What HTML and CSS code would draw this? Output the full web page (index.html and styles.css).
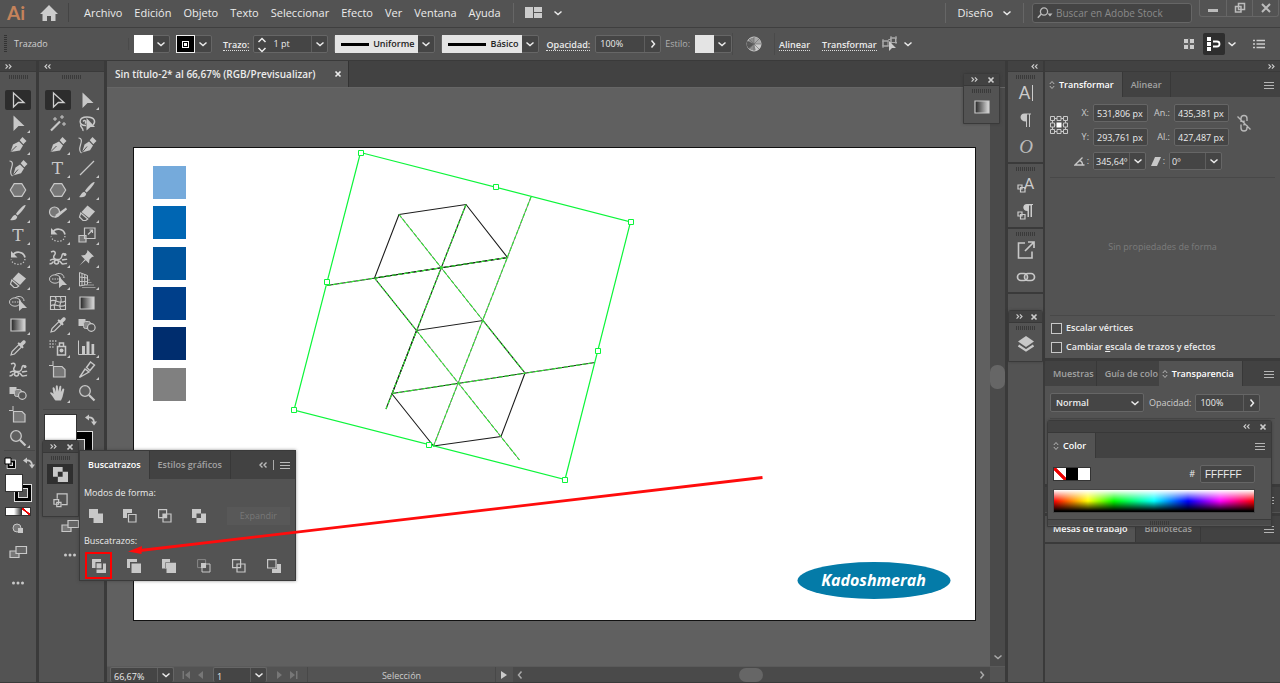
FILE: index.html
```html
<!DOCTYPE html>
<html lang="es">
<head>
<meta charset="utf-8">
<title>Sin título-2* al 66,67% (RGB/Previsualizar)</title>
<link rel="stylesheet" href="styles.css">
</head>
<body>
<svg class="sprite" aria-hidden="true">
  <defs>
    <linearGradient id="fade"><stop offset="0" stop-color="#222"/><stop offset="1" stop-color="#ddd"/></linearGradient>
  </defs>
  <symbol id="chev" viewBox="0 0 10 10"><path d="M1.500 3.500 5 6.500 8.500 3.500" fill="none" stroke="currentColor" stroke-width="1.500"/></symbol>
  <symbol id="chev-r" viewBox="0 0 10 10"><path d="M3.500 1.500 6.500 5 3.500 8.500" fill="none" stroke="currentColor" stroke-width="1.500"/></symbol>
  <symbol id="chev-l" viewBox="0 0 10 10"><path d="M6.500 1.500 3.500 5l3 3.500" fill="none" stroke="currentColor" stroke-width="1.500"/></symbol>
  <symbol id="updown" viewBox="0 0 10 18"><path d="M1.500 6 5 2.500 8.500 6M1.500 12 5 15.500 8.500 12" fill="none" stroke="currentColor" stroke-width="1.500"/></symbol>
  <symbol id="sort" viewBox="0 0 6 10"><path d="M.8 4 3 1.500 5.200 4M.8 6 3 8.500 5.200 6" fill="none" stroke="currentColor"/></symbol>
  <symbol id="dbl-r" viewBox="0 0 8 6"><path d="M.5.500 3 3 .5 5.500M4.500.500 7 3 4.500 5.500" fill="none" stroke="currentColor" stroke-width="1.400"/></symbol>
  <symbol id="dbl-l" viewBox="0 0 8 6"><path d="M3.500.500 1 3l2.500 2.500M7.500.500 5 3l2.500 2.500" fill="none" stroke="currentColor" stroke-width="1.400"/></symbol>
  <symbol id="x" viewBox="0 0 8 8"><path d="M1.500 1.500l5 5M6.500 1.500l-5 5" stroke="currentColor" stroke-width="1.700"/></symbol>
  <symbol id="menu" viewBox="0 0 10 8"><path d="M0 1.500h10M0 4.500h10M0 7.500h10" stroke="currentColor"/></symbol>
  <symbol id="dots" viewBox="0 0 20 20"><g fill="#c8c8c8"><circle cx="5.500" cy="10" r="1.500"/><circle cx="10" cy="10" r="1.500"/><circle cx="14.500" cy="10" r="1.500"/></g></symbol>
  <symbol id="home" viewBox="0 0 18 16"><path d="M9 0 18 9h-2.500v7h-4.500v-5H7v5H2.500V9H0z" fill="#ccc"/></symbol>
  <symbol id="layout" viewBox="0 0 17 11"><path d="M0 0h8v11H0zM9 0h8v5H9zM9 6h8v5H9z" fill="#ccc"/></symbol>
  <symbol id="search" viewBox="0 0 16 12"><circle cx="7" cy="4.500" r="3.600" fill="none" stroke="#bbb" stroke-width="1.300"/><path d="M4.300 7 .8 10.800" stroke="#bbb" stroke-width="1.500"/><path d="M10.500 6.500h5L13 9.500z" fill="#bbb"/></symbol>

  <symbol id="select" viewBox="0 0 20 20"><path d="M5.500 3 16 12.500h-5.700L5.500 17z" fill="none" stroke="#d0d0d0" stroke-width="1.300"/></symbol>
  <symbol id="direct" viewBox="0 0 20 20"><path d="M5.500 2.500 16.500 13h-6L5.500 18z" fill="#c8c8c8"/></symbol>
  <symbol id="pen" viewBox="0 0 20 20"><path d="M2.500 17 5 9.500 11 6.500l4 4-3 5z" fill="#c8c8c8"/><path d="M2.500 17 8.500 11" stroke="#535353"/><path d="M11.700 5.300 14.500 2l4 4-3.200 3.200z" fill="#c8c8c8"/></symbol>
  <symbol id="curve" viewBox="0 0 20 20"><path d="M5 17.500 7.500 9.500 12 6.500l4 4-3 4.700z" fill="#c8c8c8"/><path d="M5 17.500 10 11.500" stroke="#535353"/><path d="M12.700 5.300 15.500 2l4 4-3.200 3.200z" fill="#c8c8c8"/><path d="M1.500 3c4 0 3 4 2 7s-2 6 1 8" fill="none" stroke="#c8c8c8" stroke-width="1.200"/></symbol>
  <symbol id="hex" viewBox="0 0 20 20"><path d="M6.200 3.700h7.600l3.900 6.300-3.900 6.300H6.200L2.300 10z" fill="#777" stroke="#c8c8c8" stroke-width="1.200"/></symbol>
  <symbol id="brush" viewBox="0 0 20 20"><path d="M17.500 2c1 1-6 9.500-8 10.500L8 11c1-2.500 8-10 9.500-9zM7.300 11.800l2 2C9 17 5 18 2 17c2-1 2-4.500 5.300-5.200z" fill="#c8c8c8"/></symbol>
  <symbol id="rotate" viewBox="0 0 20 20"><path d="M4.500 8C7 2.500 15.500 3 17 9.500" fill="none" stroke="#c8c8c8" stroke-width="1.700"/><path d="M3 3v6.500h6.500z" fill="#c8c8c8"/><path d="M17 11c-1 7-12 7-14 .5" fill="none" stroke="#c8c8c8" stroke-width="1.200" stroke-dasharray="1.300 1.700"/></symbol>
  <symbol id="eraser" viewBox="0 0 20 20"><path d="M10.500 2.500l7.500 6-6 6.500-7.500-6z" fill="#c8c8c8"/><path d="M3.800 10l7 6-2 1.500H6L2.500 14z" fill="none" stroke="#c8c8c8" stroke-width="1.200"/></symbol>
  <symbol id="build" viewBox="0 0 20 20"><ellipse cx="7" cy="9" rx="5.500" ry="4.200" fill="none" stroke="#c8c8c8"/><path d="M7 5c3-3 9-1.500 9 3" fill="none" stroke="#c8c8c8"/><path d="M4 9h7" stroke="#c8c8c8" stroke-dasharray="1.500 1"/><path d="M11 6.500l8 8.500h-4.500L11 18z" fill="#c8c8c8"/></symbol>
  <symbol id="grad" viewBox="0 0 20 20"><path d="M3 4h14v12H3z" fill="url(#fade)" stroke="#c8c8c8" stroke-width="1.200"/></symbol>
  <symbol id="dropper" viewBox="0 0 20 20"><path d="M3 17l1-3.500 7-7 2.500 2.500-7 7z" fill="none" stroke="#c8c8c8" stroke-width="1.200"/><path d="M9.500 5.500l1.200-1.200 1.500 1L14.700 2.700c2-1.500 4 .7 2.600 2.600l-2.600 2.500 1 1.500-1.200 1.200z" fill="#c8c8c8"/></symbol>
  <symbol id="warp" viewBox="0 0 20 20"><g fill="none" stroke="#c8c8c8" stroke-width="1.500"><path d="M3 4c4-2 5 1 3.500 3s-1 4 2 4.500c4 .5 5-1 5.500-4s3-2 2.500 0M2 12.500c3-3 4 0 6-1M1.500 15.500c2 1 3-1 4-2M11 13c2 0 2 3 4 3s3-1 4-.5M14 12c2-1 4 0 5-1"/><circle cx="8.500" cy="14" r="2"/></g><circle cx="17" cy="6.500" r="1.500" fill="#c8c8c8"/></symbol>
  <symbol id="blend" viewBox="0 0 20 20"><path d="M1.500 4h7v7h-7z" fill="#c8c8c8"/><rect x="6.500" y="6.500" width="7" height="7" rx="2" fill="#888" stroke="#c8c8c8"/><circle cx="14.300" cy="12.500" r="3.800" fill="#535353" stroke="#c8c8c8" stroke-width="1.200"/></symbol>
  <symbol id="board" viewBox="0 0 20 20"><path d="M5 1v5M1 5.500h4" stroke="#c8c8c8"/><path d="M5.500 6.500H14l3 3V17H5.500z" fill="#777" stroke="#c8c8c8" stroke-width="1.200"/></symbol>
  <symbol id="zoom" viewBox="0 0 20 20"><circle cx="8" cy="8" r="5.300" fill="#5f5f5f" stroke="#c8c8c8" stroke-width="1.300"/><path d="M12 12l5.500 5.500" stroke="#c8c8c8" stroke-width="2.200"/></symbol>
  <symbol id="wand" viewBox="0 0 20 20"><path d="M3 17.500 12 8.500" stroke="#c8c8c8" stroke-width="2.200"/><path d="M14 2v4M12 4h4M7 4v4M5 6h4M16 9v4M14 11h4" stroke="#c8c8c8"/></symbol>
  <symbol id="lasso" viewBox="0 0 20 20"><path d="M9 12.500C1 13 1 4 10 4c8 0 9 5 6 8M5 11c-4 2 2 4 1 7M6 8.500c2-2 4 0 2 2" fill="none" stroke="#c8c8c8" stroke-width="1.400"/><path d="M9.500 5l8.500 9h-4.500l-4 3.500z" fill="#c8c8c8"/></symbol>
  <symbol id="line" viewBox="0 0 20 20"><path d="M3 17 17 3" stroke="#c8c8c8" stroke-width="1.300"/></symbol>
  <symbol id="shaper" viewBox="0 0 20 20"><circle cx="6.500" cy="9" r="5" fill="#777" stroke="#c8c8c8" stroke-width="1.200"/><path d="M6.500 15l1.500-3.500L18 4.500l1 2L10 14z" fill="#c8c8c8"/></symbol>
  <symbol id="scale" viewBox="0 0 20 20"><path d="M2 10.500h7V17H2z" fill="#777" stroke="#c8c8c8" stroke-width="1.200"/><path d="M7.500 3H18v10.500H7.500zM11 9.500l4-4M12.500 5H15.500v3" fill="none" stroke="#c8c8c8" stroke-width="1.200"/></symbol>
  <symbol id="pin" viewBox="0 0 20 20"><path d="M10.500 2l6.500 6.500-2 .5-2.500 2.500-.5 4L4 7.500l4-.5 2-2.500zM8.500 10.500 9.500 11.500 2.500 17.500z" fill="#c8c8c8"/></symbol>
  <symbol id="persp" viewBox="0 0 20 20"><path d="M2.500 2.500V16l8-1.500V5.500zM5 3.500v12M7.700 4.500v10.500M2.500 7l8 1M2.500 11.500l8 .2" fill="none" stroke="#c8c8c8"/><path d="M11 12.500h3.500M9 15h8M5 17.500h13.500M11 10h2" stroke="#999"/></symbol>
  <symbol id="mesh" viewBox="0 0 20 20"><path d="M2.500 3.500h15v13h-15zM2.500 8c5-3 8 4 15 0M2.500 13c5-4 9 3 15-1M7 3.500c4 4-3 8 0 13M12 3.500c4 5-3 8 1 13" fill="none" stroke="#c8c8c8" stroke-width="1.100"/></symbol>
  <symbol id="spray" viewBox="0 0 20 20"><path d="M9.500 8.500h8V17h-8zM11.500 8V5h4v3" fill="none" stroke="#c8c8c8" stroke-width="1.500"/><circle cx="13.500" cy="12.500" r="2" fill="#c8c8c8"/><path d="M1.500 3h8M1.500 6h6M1.500 9h4" stroke="#c8c8c8" stroke-width="1.300" stroke-dasharray="1.300 1.500"/></symbol>
  <symbol id="chart" viewBox="0 0 20 20"><path d="M1.500 2.500v14h17" fill="none" stroke="#c8c8c8"/><path d="M5 8h3v8H5zM9.500 3.500h3V16h-3zM14.500 6h2.700v10h-2.700z" fill="#c8c8c8"/></symbol>
  <symbol id="knife" viewBox="0 0 20 20"><path d="M2.500 17.500 8 9l4 3zM9.500 7.500l4-5.500 4 3-4.500 5.500z" fill="none" stroke="#c8c8c8" stroke-width="1.400"/></symbol>
  <symbol id="hand" viewBox="0 0 20 20"><path d="M6.500 16.500C5 13.500 3 11.500 2 10c.5-1.500 2-.7 3.500 1L4.500 5c.8-1.200 1.800-.7 2.300.8l1 3.200V3.200c.5-1.300 1.700-1.200 2 0l.6 5.300 1-5c.8-1.200 2-.8 1.900.6l-.4 5 1.700-3.300c1-1 2 0 1.600 1.300L14.500 14l-1.500 3.500H7.500z" fill="#c8c8c8"/></symbol>
  <symbol id="swap" viewBox="0 0 12 12"><path d="M3 3.500c4-.5 6 1.500 6 5" fill="none" stroke="#c8c8c8" stroke-width="1.800"/><path d="M0 3.500 4 .500v6zM6 7.500h6L9 11.500z" fill="#c8c8c8"/></symbol>
  <symbol id="deflt" viewBox="0 0 12 12"><path d="M4.500 4.500h5.500V10H4.500z" fill="none" stroke="#fff" stroke-width="3.500"/><path d="M4.500 4.500h5.500V10H4.500z" fill="none" stroke="#000" stroke-width="2"/><path d="M1 1h6v6H1z" fill="#fff" stroke="#000"/></symbol>
  <symbol id="drawmode" viewBox="0 0 20 20"><circle cx="9" cy="9" r="4" fill="#777" stroke="#c8c8c8"/><path d="M10 9h5v5h-5z" fill="#c8c8c8"/></symbol>
  <symbol id="screen" viewBox="0 0 20 20"><path d="M2 9h9v6.500H2z" fill="#777" stroke="#c8c8c8" stroke-width="1.200"/><path d="M8 4.500h10.500v7H8z" fill="#666" stroke="#c8c8c8" stroke-width="1.200"/></symbol>

  <symbol id="unite" viewBox="0 0 14 14"><path d="M0 0h9v4.500h5V14H4.500V9H0z" fill="#c8c8c8"/></symbol>
  <symbol id="minusf" viewBox="0 0 14 14"><path d="M0 0h9v4H4v5H0z" fill="#c8c8c8"/><path d="M5.500 5.500h7.500V13H5.500z" fill="none" stroke="#c8c8c8" stroke-width="1.200"/></symbol>
  <symbol id="inter" viewBox="0 0 14 14"><path d="M.6.600h8v8h-8zM5 5h8v8H5z" fill="none" stroke="#c8c8c8" stroke-width="1.200"/><path d="M5 5h4v4H5z" fill="#c8c8c8"/></symbol>
  <symbol id="exclude" viewBox="0 0 14 14"><path d="M0 0h9v4.500h5V14H4.500V9H0zM4.500 4.500V9H9V4.500z" fill="#c8c8c8" fill-rule="evenodd"/></symbol>
  <symbol id="divide" viewBox="0 0 14 14"><path d="M0 0h9v3H3.500v6H0zM14 14H4.500v-3.500H11V4.500h3z" fill="#c8c8c8"/><path d="M4.500 4.300h5v5h-5z" fill="#c8c8c8"/></symbol>
  <symbol id="trim" viewBox="0 0 14 14"><path d="M0 0h10v3H3v6H0zM4.500 4.500H14V14H4.500z" fill="#c8c8c8"/></symbol>
  <symbol id="merge" viewBox="0 0 14 14"><path d="M0 0h8v3.800h6V14H4.500V9.500H0z" fill="#c8c8c8"/><path d="M3.500 9.500V3.500H8" fill="none" stroke="#888"/></symbol>
  <symbol id="crop" viewBox="0 0 14 14"><path d="M.6.600h8v8h-8z" fill="none" stroke="#888"/><path d="M5 5h8v8H5z" fill="none" stroke="#c8c8c8"/><path d="M4 4h5v5H4z" fill="#c8c8c8"/></symbol>
  <symbol id="outline" viewBox="0 0 14 14"><path d="M.6.600h8v8h-8zM5 5h8v8H5z" fill="none" stroke="#c8c8c8" stroke-width="1.200"/></symbol>
  <symbol id="minusb" viewBox="0 0 14 14"><path d="M10 5h4v9H5v-4h5z" fill="#c8c8c8"/><path d="M.6.600h8.400V9H.6z" fill="none" stroke="#c8c8c8" stroke-width="1.200"/></symbol>
  <symbol id="gstyle" viewBox="0 0 16 16"><path d="M4.500 6V1H15v11.500H9" fill="none" stroke="#c8c8c8" stroke-width="1.300"/><path d="M1 7h5v5H1zM4 10h4.500v4.500H4z" fill="none" stroke="#c8c8c8" stroke-width="1.300"/></symbol>

  <symbol id="para" viewBox="0 0 20 20"><path d="M8.500 3.500H15v1h-1V17h-1V4.500h-2V17h-1v-5.500C3 11.500 3 3.500 8.500 3.500z" fill="#c8c8c8"/></symbol>
  <symbol id="chain" viewBox="0 0 20 20"><g fill="none" stroke="#c8c8c8" stroke-width="1.700"><rect x="1.500" y="6.500" width="10" height="7" rx="3.500"/><rect x="8.500" y="6.500" width="10" height="7" rx="3.500"/></g></symbol>
  <symbol id="export" viewBox="0 0 20 20"><path d="M9 3H2.500v15H16v-6.500" fill="none" stroke="#c8c8c8" stroke-width="1.600"/><path d="M9 11l8.500-8.500M12 2h6v6" fill="none" stroke="#c8c8c8" stroke-width="1.700"/></symbol>
  <symbol id="layers" viewBox="0 0 20 20"><path d="M10 2l8 5.500-8 5.500-8-5.500z" fill="#c8c8c8"/><path d="M2.500 11.500 10 16.500l7.500-5" fill="none" stroke="#c8c8c8" stroke-width="2.200"/></symbol>
  <symbol id="unlink" viewBox="0 0 16 18"><path d="M5 8V4.500a3 3 0 0 1 6 0V7M5 10.500V14a3 3 0 0 0 6 0v-3M8 6.500v5M1.500 2.500l13 13" fill="none" stroke="#b8b8b8" stroke-width="1.400"/></symbol>
  <symbol id="refpt" viewBox="0 0 18 18"><path d="M2.500 2.500h13v13h-13z" fill="none" stroke="#c8c8c8"/><path d="M2.500 9h13" stroke="#c8c8c8"/><g fill="#535353" stroke="#c8c8c8"><path d="M.5.500h4v4h-4zM7 .5h4v4H7zM13.500.500h4v4h-4zM.5 7h4v4h-4zM13.500 7h4v4h-4zM.5 13.500h4v4h-4zM7 13.500h4v4H7zM13.500 13.500h4v4h-4z"/></g><path d="M6 6h6v6H6z" fill="#fff" stroke="#535353"/></symbol>
  <symbol id="wheel" viewBox="0 0 16 16"><circle cx="8" cy="8" r="7" fill="#8c8c8c" stroke="#ccc"/><path d="M8 8V1a7 7 0 0 1 7 7z" fill="#aaa"/><path d="M8 8h7a7 7 0 0 1-5 6.700z" fill="#ccc"/><path d="M8 8 2.500 12.500A7 7 0 0 1 1.500 5z" fill="#555"/><path d="M8 1v14M1 8h14M3 3l10 10M13 3 3 13" stroke="#666" stroke-width=".6"/></symbol>
  <symbol id="isolate" viewBox="0 0 16 16"><path d="M1 5h5v5H1zM9 2h4.500v4.500H9zM6 4l3-1M1 3v9M0 5h7M0 10h7M9 0v8M14 0v8M8 2h7M8 6.500h7" fill="none" stroke="#aaa"/><path d="M7 5l7 7h-4l-3 3z" fill="#ccc"/></symbol>
  <symbol id="pixgrid" viewBox="0 0 12 12"><path d="M1 1h4v4H1zM7 1h4v4H7zM1 7h4v4H1zM7 7h4v4H7z" fill="#ccc"/><path d="M6 0v12M0 6h12" stroke="#888" stroke-width=".6"/></symbol>
  <symbol id="snap" viewBox="0 0 14 14"><path d="M0 0h4v4H0zM0 5h4v4H0zM0 10h4v4H0z" fill="#fff"/><path d="M6 4.500h4a2.500 2.500 0 0 1 0 5H6" fill="none" stroke="#fff" stroke-width="1.800"/></symbol>
  <symbol id="list" viewBox="0 0 12 10"><path d="M3.500 1.500H12M3.500 5H12M3.500 8.500H12M0 1.500h2M0 5h2M0 8.500h2" stroke="#ccc" stroke-width="1.300"/></symbol>
  <symbol id="angle" viewBox="0 0 11 9"><path d="M8.500.500 1 8h9.500M5.500 3.500c2 .5 3 2 3 4.500" fill="none" stroke="#c8c8c8" stroke-width="1.300"/></symbol>
  <symbol id="shear" viewBox="0 0 10 9"><path d="M4 0h6L6 9H0z" fill="#c8c8c8"/></symbol>
</svg>

<header class="menubar">
  <span class="logo">Ai</span>
  <button class="home" aria-label="Inicio"><svg width="18" height="16"><use href="#home"/></svg></button>
  <nav class="menus">
    <a href="#">Archivo</a><a href="#">Edición</a><a href="#">Objeto</a><a href="#">Texto</a><a href="#">Seleccionar</a><a href="#">Efecto</a><a href="#">Ver</a><a href="#">Ventana</a><a href="#">Ayuda</a>
  </nav>
  <button class="arrange" aria-label="Organizar documentos"><svg width="17" height="11"><use href="#layout"/></svg><svg width="10" height="10"><use href="#chev"/></svg></button>
  <div class="menubar-end">
    <button class="workspace-name">Diseño<svg width="10" height="10"><use href="#chev"/></svg></button>
    <label class="search"><svg width="16" height="12"><use href="#search"/></svg><input type="search" placeholder="Buscar en Adobe Stock" aria-label="Buscar en Adobe Stock"></label>
    <div class="win">
      <button aria-label="Minimizar"><svg width="12" height="12" viewBox="0 0 12 12"><path d="M1 8.500h10" stroke="#bbb" stroke-width="3"/></svg></button>
      <button aria-label="Restaurar"><svg width="12" height="12" viewBox="0 0 12 12"><path d="M4.500 1.500h6v6h-6zM1.500 4.500h5.500v5.500H1.500z" fill="none" stroke="#bbb" stroke-width="1.500"/></svg></button>
      <button aria-label="Cerrar"><svg width="12" height="12" viewBox="0 0 12 12"><path d="M2 2l8 8M10 2l-8 8" stroke="#bbb" stroke-width="2"/></svg></button>
    </div>
  </div>
</header>

<section class="options" aria-label="Control">
  <i class="vgrip"></i>
  <span class="context">Trazado</span>
  <div class="combo"><span class="chip white"></span><button aria-label="Relleno"><svg width="10" height="10"><use href="#chev"/></svg></button></div>
  <div class="combo"><span class="chip stroke-chip"></span><button aria-label="Trazo"><svg width="10" height="10"><use href="#chev"/></svg></button></div>
  <label class="dotted" for="stroke-w">Trazo:</label>
  <div class="combo num"><button class="stepper" aria-label="Cambiar grosor"><svg width="10" height="18"><use href="#updown"/></svg></button><input id="stroke-w" value="1 pt"><button aria-label="Grosores"><svg width="10" height="10"><use href="#chev"/></svg></button></div>
  <div class="combo profile"><span class="sample"><b></b>Uniforme</span><button aria-label="Perfil"><svg width="10" height="10"><use href="#chev"/></svg></button></div>
  <div class="combo profile"><span class="sample"><b></b>Básico</span><button aria-label="Pincel"><svg width="10" height="10"><use href="#chev"/></svg></button></div>
  <label class="dotted" for="opac">Opacidad:</label>
  <div class="combo opac"><input id="opac" value="100%"><button aria-label="Más opacidad"><svg width="10" height="10"><use href="#chev-r"/></svg></button></div>
  <span class="dim">Estilo:</span>
  <div class="combo style"><span class="chip pale"></span><button aria-label="Estilo gráfico"><svg width="10" height="10"><use href="#chev"/></svg></button></div>
  <button class="bare wheel" aria-label="Volver a colorear"><svg width="16" height="16"><use href="#wheel"/></svg></button>
  <a class="dotted link-align" href="#">Alinear</a>
  <a class="dotted link-transform" href="#">Transformar</a>
  <button class="bare iso" aria-label="Aislar"><svg width="16" height="16"><use href="#isolate"/></svg><svg width="10" height="10"><use href="#chev"/></svg></button>
  <div class="options-end">
    <button class="bare" aria-label="Píxel"><svg width="12" height="12"><use href="#pixgrid"/></svg></button>
    <button class="bare snap" aria-label="Ajustar"><svg width="14" height="14"><use href="#snap"/></svg></button>
    <button class="bare snap-menu" aria-label="Opciones de ajuste"><svg width="10" height="10"><use href="#chev"/></svg></button>
    <button class="bare listbtn" aria-label="Menú"><svg width="12" height="10"><use href="#list"/></svg></button>
  </div>
</section>

<main class="work">
  <aside class="dock dock-one">
    <div class="dock-head"><svg width="8" height="6"><use href="#dbl-r"/></svg></div>
    <div class="dock-body">
      <i class="grip"></i>
      <div class="tools">
        <button class="tool on" aria-label="Selección"><svg><use href="#select"/></svg></button>
        <button class="tool more" aria-label="Selección directa"><svg><use href="#direct"/></svg></button>
        <button class="tool more" aria-label="Pluma"><svg><use href="#pen"/></svg></button>
        <button class="tool" aria-label="Curvatura"><svg><use href="#curve"/></svg></button>
        <button class="tool more" aria-label="Polígono"><svg><use href="#hex"/></svg></button>
        <button class="tool more" aria-label="Pincel"><svg><use href="#brush"/></svg></button>
        <button class="tool more letter">T</button>
        <button class="tool more" aria-label="Rotar"><svg><use href="#rotate"/></svg></button>
        <button class="tool more" aria-label="Borrador"><svg><use href="#eraser"/></svg></button>
        <button class="tool" aria-label="Creador de formas"><svg><use href="#build"/></svg></button>
        <button class="tool more" aria-label="Degradado"><svg><use href="#grad"/></svg></button>
        <button class="tool" aria-label="Cuentagotas"><svg><use href="#dropper"/></svg></button>
        <button class="tool" aria-label="Posición libre"><svg><use href="#warp"/></svg></button>
        <button class="tool" aria-label="Fusión"><svg><use href="#blend"/></svg></button>
        <button class="tool" aria-label="Mesa de trabajo"><svg><use href="#board"/></svg></button>
        <button class="tool more" aria-label="Zoom"><svg><use href="#zoom"/></svg></button>
      </div>
      <div class="ink-row"><svg width="12" height="12"><use href="#deflt"/></svg><svg width="12" height="12"><use href="#swap"/></svg></div>
      <div class="inks"><span class="ink-stroke"></span><span class="ink-fill"></span></div>
      <div class="modes"><span></span><span class="m-grad"></span><span class="m-none"></span></div>
      <button class="tool solo" aria-label="Modo de dibujo"><svg><use href="#drawmode"/></svg></button>
      <button class="tool solo" aria-label="Modo de pantalla"><svg><use href="#screen"/></svg></button>
      <button class="tool solo last" aria-label="Editar barra"><svg><use href="#dots"/></svg></button>
    </div>
  </aside>

  <aside class="dock dock-two">
    <div class="dock-head"><svg width="8" height="6"><use href="#dbl-l"/></svg></div>
    <div class="dock-body">
      <i class="grip"></i>
      <div class="tools two">
        <button class="tool on" aria-label="Selección"><svg><use href="#select"/></svg></button>
        <button class="tool more" aria-label="Selección directa"><svg><use href="#direct"/></svg></button>
        <button class="tool" aria-label="Varita mágica"><svg><use href="#wand"/></svg></button>
        <button class="tool" aria-label="Lazo"><svg><use href="#lasso"/></svg></button>
        <button class="tool more" aria-label="Pluma"><svg><use href="#pen"/></svg></button>
        <button class="tool" aria-label="Curvatura"><svg><use href="#curve"/></svg></button>
        <button class="tool more letter">T</button>
        <button class="tool more" aria-label="Segmento de línea"><svg><use href="#line"/></svg></button>
        <button class="tool more" aria-label="Polígono"><svg><use href="#hex"/></svg></button>
        <button class="tool more" aria-label="Pincel"><svg><use href="#brush"/></svg></button>
        <button class="tool more" aria-label="Shaper"><svg><use href="#shaper"/></svg></button>
        <button class="tool more" aria-label="Borrador"><svg><use href="#eraser"/></svg></button>
        <button class="tool more" aria-label="Rotar"><svg><use href="#rotate"/></svg></button>
        <button class="tool more" aria-label="Escala"><svg><use href="#scale"/></svg></button>
        <button class="tool more" aria-label="Anchura"><svg><use href="#warp"/></svg></button>
        <button class="tool more" aria-label="Posición"><svg><use href="#pin"/></svg></button>
        <button class="tool more" aria-label="Creador de formas"><svg><use href="#build"/></svg></button>
        <button class="tool more" aria-label="Perspectiva"><svg><use href="#persp"/></svg></button>
        <button class="tool" aria-label="Malla"><svg><use href="#mesh"/></svg></button>
        <button class="tool" aria-label="Degradado"><svg><use href="#grad"/></svg></button>
        <button class="tool more" aria-label="Cuentagotas"><svg><use href="#dropper"/></svg></button>
        <button class="tool" aria-label="Fusión"><svg><use href="#blend"/></svg></button>
        <button class="tool more" aria-label="Rociar símbolos"><svg><use href="#spray"/></svg></button>
        <button class="tool more" aria-label="Gráfica"><svg><use href="#chart"/></svg></button>
        <button class="tool" aria-label="Mesa de trabajo"><svg><use href="#board"/></svg></button>
        <button class="tool more" aria-label="Sector"><svg><use href="#knife"/></svg></button>
        <button class="tool more" aria-label="Mano"><svg><use href="#hand"/></svg></button>
        <button class="tool" aria-label="Zoom"><svg><use href="#zoom"/></svg></button>
      </div>
      <div class="big-inks"><span class="ink-stroke"></span><span class="ink-fill"></span><svg width="12" height="12"><use href="#swap"/></svg></div>
      <button class="tool solo right" aria-label="Modo de pantalla"><svg><use href="#screen"/></svg></button>
      <button class="tool solo right" aria-label="Editar barra"><svg><use href="#dots"/></svg></button>
    </div>
  </aside>

  <section class="doc">
    <div class="doc-tabs"><div class="doc-tab">Sin título-2* al 66,67% (RGB/Previsualizar)<button class="bare" aria-label="Cerrar"><svg width="8" height="8"><use href="#x"/></svg></button></div></div>
    <div class="view">
      <div class="canvas">
        <svg class="art" viewBox="107 88 883 579" preserveAspectRatio="xMinYMin slice">
          <rect x="133.500" y="147.500" width="842" height="473" fill="#fff" stroke="#111"/>
          <path fill="#75aadb" d="M153 166h33v33h-33z"/><path fill="#0066b3" d="M153 206h33v33h-33z"/><path fill="#00549c" d="M153 247h33v33h-33z"/><path fill="#003f8a" d="M153 287h33v33h-33z"/><path fill="#002d6e" d="M153 327h33v33h-33z"/><path fill="#808080" d="M153 368h33v33h-33z"/>
          <g fill="none" stroke="#1c1c1c" stroke-width="1.100">
            <path d="M399 214.500 466 204.500 507.500 257.500 374.500 278zM374.500 278 416.500 330.500 483 320.500 525 373 501 436.500 433.500 446 392 394 416.500 330.500"/>
            <path d="M327 285.500 507.500 257.500M466 204.500 386 409M392 393.500 595 362.500"/>
          </g>
          <g fill="none" stroke="#777"><path d="M531 197 433.500 446M399 214.500 483 320.500M416.500 330.500 519.500 460"/></g>
          <g fill="none" stroke="#35e035" stroke-width="1.200" stroke-dasharray="4 2">
            <path d="M399 214.500 483 320.500M416.500 330.500 519.500 460M531 197 433.500 446M327 285.500 507.500 257.500M466 204.500 386 409M392 393.500 595 362.500M374.500 278 416.500 330.500M483 320.500 525 373"/>
          </g>
          <path d="M360.500 152.500 630.500 222 565 479.500 294 410z" fill="none" stroke="#0cf53a" stroke-width="1.200"/>
          <g fill="#fff" stroke="#0cf53a"><path d="M358.500 150.500h5v5h-5zM628.500 219.500h5v5h-5zM562.500 477.500h5v5h-5zM291.500 407.500h5v5h-5zM493.500 184.500h5v5h-5zM595.500 348.500h5v5h-5zM426.500 442.500h5v5h-5zM324.500 279.500h5v5h-5z"/></g>
          <ellipse cx="874" cy="580.500" rx="76.500" ry="18.500" fill="#047ba8"/>
          <text class="brand" x="873.500" y="586" text-anchor="middle">Kadoshmerah</text>
        </svg>
      </div>
      <div class="vscroll"><span></span><svg width="10" height="10"><use href="#chev"/></svg></div>
    </div>
    <footer class="status">
      <div class="combo zoomf"><input value="66,67%" aria-label="Zoom"><button aria-label="Niveles de zoom"><svg width="10" height="10"><use href="#chev"/></svg></button></div>
      <div class="pager"><svg width="8" height="8" viewBox="0 0 8 8"><path d="M.5 0h1.500v8H.5zM8 0v8L3 4z" fill="#777"/></svg><svg width="8" height="8" viewBox="0 0 8 8"><path d="M6 0v8L1 4z" fill="#777"/></svg></div>
      <div class="combo page"><input value="1" aria-label="Mesa de trabajo"><button aria-label="Mesas"><svg width="10" height="10"><use href="#chev"/></svg></button></div>
      <div class="pager"><svg width="8" height="8" viewBox="0 0 8 8"><path d="M2 0v8l5-4z" fill="#777"/></svg><svg width="8" height="8" viewBox="0 0 8 8"><path d="M0 0v8l5-4zM6 0h1.500v8H6z" fill="#777"/></svg></div>
      <span class="toolname">Selección</span>
      <svg class="play" width="6" height="8" viewBox="0 0 6 8"><path d="M0 0v8l6-4z" fill="#ccc"/></svg>
      <div class="hscroll"><svg width="10" height="10"><use href="#chev-l"/></svg><span></span><svg width="10" height="10"><use href="#chev-r"/></svg></div>
    </footer>
  </section>

  <aside class="icons">
    <div class="dock-head end"><svg width="8" height="6"><use href="#dbl-l"/></svg></div>
    <div class="group"><i class="grip"></i>
      <button class="ico" aria-label="Carácter"><svg viewBox="0 0 20 20"><text x="8.500" y="16" text-anchor="middle" font-family="Lato" font-size="17" fill="#ccc">A</text><path d="M16.500 2v16" stroke="#ccc"/></svg></button>
      <button class="ico" aria-label="Párrafo"><svg><use href="#para"/></svg></button>
      <button class="ico" aria-label="OpenType"><svg viewBox="0 0 20 20"><text x="10" y="16" text-anchor="middle" font-family="Liberation Serif" font-style="italic" font-size="19" fill="#bbb">O</text></svg></button></div>
    <div class="group"><i class="grip"></i>
      <button class="ico" aria-label="Estilos de carácter"><svg viewBox="0 0 20 20"><text x="13" y="14" text-anchor="middle" font-family="Lato" font-size="15" fill="#ccc">A</text><path d="M2 10h4v4H2zM4.500 12.500H9V17H4.500z" fill="none" stroke="#ccc" stroke-width="1.200"/></svg></button>
      <button class="ico" aria-label="Estilos de párrafo"><svg viewBox="0 0 20 20"><path d="M11 2h6v1h-1v12h-1.500V3.500H13V15h-1.500V9C6 9 6 2 11 2z" fill="#ccc"/><path d="M2 10h4v4H2zM4.500 12.500H9V17H4.500z" fill="none" stroke="#ccc" stroke-width="1.200"/></svg></button></div>
    <div class="group"><i class="grip"></i>
      <button class="ico" aria-label="Exportación"><svg><use href="#export"/></svg></button>
      <button class="ico" aria-label="Vínculos"><svg><use href="#chain"/></svg></button></div>
    <div class="group rest"></div>
    <div class="float layers">
      <div class="float-head"><svg width="8" height="6"><use href="#dbl-r"/></svg><button class="bare" aria-label="Cerrar"><svg width="8" height="8"><use href="#x"/></svg></button></div>
      <i class="grip"></i>
      <button class="ico" aria-label="Capas"><svg><use href="#layers"/></svg></button>
    </div>
  </aside>

  <aside class="panels">
    <div class="dock-head end"><svg width="8" height="6"><use href="#dbl-r"/></svg></div>
    <section class="panel transform">
      <div class="tabs"><button class="tab on"><svg width="6" height="10"><use href="#sort"/></svg>Transformar</button><button class="tab">Alinear</button><button class="bare burger" aria-label="Menú"><svg width="10" height="8"><use href="#menu"/></svg></button></div>
      <div class="geometry">
        <svg class="refpt" width="18" height="18"><use href="#refpt"/></svg>
        <div class="coords">
          <label for="px">X:</label><input id="px" value="531,806 px"><label for="pw">An.:</label><input id="pw" value="435,381 px">
          <label for="py">Y:</label><input id="py" value="293,761 px"><label for="ph">Al.:</label><input id="ph" value="427,487 px">
          <div class="angles">
            <label for="pa"><svg width="11" height="9"><use href="#angle"/></svg>:</label><div class="combo"><input id="pa" value="345,64º"><button aria-label="Ángulos"><svg width="10" height="10"><use href="#chev"/></svg></button></div>
            <label for="ps"><svg width="10" height="9"><use href="#shear"/></svg>:</label><div class="combo"><input id="ps" value="0º"><button aria-label="Distorsión"><svg width="10" height="10"><use href="#chev"/></svg></button></div>
          </div>
        </div>
        <svg class="unlink" width="16" height="18"><use href="#unlink"/></svg>
      </div>
      <p class="empty">Sin propiedades de forma</p>
      <div class="checks">
        <label><input type="checkbox">Escalar vértices</label>
        <label><input type="checkbox"><span>Cambiar <u>e</u>scala de trazos y efectos</span></label>
      </div>
    </section>
    <section class="panel transp">
      <div class="tabs"><button class="tab">Muestras</button><button class="tab clip">Guía de colo</button><button class="tab on"><svg width="6" height="10"><use href="#sort"/></svg>Transparencia</button><button class="bare burger" aria-label="Menú"><svg width="10" height="8"><use href="#menu"/></svg></button></div>
      <div class="blendrow">
        <div class="selectbox"><select aria-label="Modo de fusión"><option>Normal</option></select><svg width="10" height="10"><use href="#chev"/></svg></div>
        <label for="op2">Opacidad:</label>
        <div class="combo"><input id="op2" value="100%"><button aria-label="Más"><svg width="10" height="10"><use href="#chev-r"/></svg></button></div>
      </div>
    </section>
    <section class="panel slim"><div class="tabs"><button class="bare burger" aria-label="Menú"><svg width="10" height="8"><use href="#menu"/></svg></button></div></section>
    <section class="panel boards">
      <div class="tabs"><button class="tab on">Mesas de trabajo</button><button class="tab">Bibliotecas</button><button class="bare burger" aria-label="Menú"><svg width="10" height="8"><use href="#menu"/></svg></button></div>
      <div class="fill"></div>
    </section>
  </aside>
</main>

<div class="float gradient">
  <div class="float-head"><svg width="8" height="6"><use href="#dbl-r"/></svg><button class="bare" aria-label="Cerrar"><svg width="8" height="8"><use href="#x"/></svg></button></div>
  <i class="grip"></i>
  <button class="ico" aria-label="Degradado"><svg><use href="#grad"/></svg></button>
</div>

<div class="float color">
  <div class="float-head"><svg width="8" height="6"><use href="#dbl-l"/></svg><button class="bare" aria-label="Cerrar"><svg width="8" height="8"><use href="#x"/></svg></button></div>
  <div class="tabs"><button class="tab on"><svg width="6" height="10"><use href="#sort"/></svg>Color</button><button class="bare burger" aria-label="Menú"><svg width="10" height="8"><use href="#menu"/></svg></button></div>
  <div class="hexrow"><div class="modes"><span class="m-none"></span><span class="m-black"></span><span></span></div><label for="hexv">#</label><input id="hexv" value="FFFFFF"></div>
  <div class="spectrum"></div>
  <div class="foot"><i class="grip"></i></div>
</div>

<div class="float mini">
  <div class="float-head"><svg width="8" height="6"><use href="#dbl-r"/></svg><button class="bare" aria-label="Cerrar"><svg width="8" height="8"><use href="#x"/></svg></button></div>
  <i class="grip"></i>
  <button class="ico on" aria-label="Buscatrazos"><svg><use href="#exclude"/></svg></button>
  <button class="ico" aria-label="Estilos gráficos"><svg><use href="#gstyle"/></svg></button>
</div>

<section class="float pathfinder">
  <div class="tabs"><button class="tab on">Buscatrazos</button><button class="tab">Estilos gráficos</button><span class="tabs-end"><svg width="8" height="6"><use href="#dbl-l"/></svg><i></i><button class="bare" aria-label="Menú"><svg width="10" height="8"><use href="#menu"/></svg></button></span></div>
  <h2>Modos de forma:</h2>
  <div class="pf-row">
    <button class="bare" aria-label="Unificar"><svg width="14" height="14"><use href="#unite"/></svg></button>
    <button class="bare" aria-label="Menos frente"><svg width="14" height="14"><use href="#minusf"/></svg></button>
    <button class="bare" aria-label="Formar intersección"><svg width="14" height="14"><use href="#inter"/></svg></button>
    <button class="bare" aria-label="Excluir"><svg width="14" height="14"><use href="#exclude"/></svg></button>
    <button class="expand" disabled>Expandir</button>
  </div>
  <h2>Buscatrazos:</h2>
  <div class="pf-row pf-finders">
    <button class="bare marked" aria-label="Dividir"><svg width="14" height="14"><use href="#divide"/></svg></button>
    <button class="bare" aria-label="Cortar"><svg width="14" height="14"><use href="#trim"/></svg></button>
    <button class="bare" aria-label="Combinar"><svg width="14" height="14"><use href="#merge"/></svg></button>
    <button class="bare" aria-label="Recortar"><svg width="14" height="14"><use href="#crop"/></svg></button>
    <button class="bare" aria-label="Contornear"><svg width="14" height="14"><use href="#outline"/></svg></button>
    <button class="bare" aria-label="Menos fondo"><svg width="14" height="14"><use href="#minusb"/></svg></button>
  </div>
</section>

<svg class="arrow" width="640" height="90" viewBox="130 470 640 90" aria-hidden="true"><path d="M762.500 477.500 140 550.500" stroke="#ff0c0c" stroke-width="2.800"/><path d="M128 551.500 142 546l-.5 8z" fill="#ff0c0c"/></svg>
</body>
</html>
```
FILE: styles.css
```css
* { box-sizing: border-box; }
body { margin: 0; height: 100vh; display: flex; flex-direction: column; overflow: hidden; background: #3a3a3a; color: #ececec; font: 9px/12px "Open Sans", "Noto Sans", sans-serif; }
button, input, select { font: inherit; color: inherit; border: 0; background: none; padding: 0; margin: 0; border-radius: 0; min-width: 0; outline: 0; }
a { color: inherit; text-decoration: none; }
svg { display: block; flex: none; }
.sprite { position: absolute; width: 0; height: 0; }
.bare { display: flex; align-items: center; justify-content: center; }

/* Menu bar */
.menubar { height: 28px; flex: none; display: flex; align-items: center; background: #535353; border-bottom: 1px solid #3f3f3f; padding-bottom: 2px; }
.logo { width: 40px; padding-left: 7px; color: #c5835b; font: 700 19px/24px "Lato", sans-serif; }
.home { width: 29px; height: 19px; border-right: 1px solid #444; }
.menus { display: flex; gap: 12px; padding-left: 15px; font-size: 11px; line-height: 16px; }
.arrange { display: flex; align-items: center; gap: 11px; height: 20px; margin-left: 12px; padding-left: 11px; border-left: 1px solid #666; }
.menubar-end { margin-left: auto; display: flex; align-items: center; align-self: stretch; }
.workspace-name { display: flex; align-items: center; gap: 9px; height: 20px; padding: 0 11px; border: solid #666; border-width: 0 1px; font-size: 11px; }
.search { width: 160px; height: 20px; margin: 0 7px 0 8px; padding: 0 4px; display: flex; align-items: center; gap: 3px; background: #444; border: 1px solid #666; border-radius: 3px; }
.search input { flex: 1; font-size: 10px; }
.search input::placeholder { color: #8a8a8a; opacity: 1; }
.win { display: flex; align-self: flex-start; margin-right: 1px; border: 1px solid #666; border-top: 0; border-radius: 0 0 3px 3px; }
.win button { width: 26px; height: 16px; display: grid; place-items: center; }
.win button + button { border-left: 1px solid #666; }

/* Control bar */
.options { height: 33px; flex: none; display: flex; align-items: center; background: #535353; border-bottom: 1px solid #3a3a3a; }
.vgrip { width: 3px; height: 18px; margin-left: 4px; background: repeating-linear-gradient(#333 0 1px, transparent 1px 2px); }
.context { width: 122px; padding-left: 7px; color: #d0d0d0; border-right: 1px solid #4a4a4a; }
.combo { display: flex; height: 18px; border: 1px solid #666; border-radius: 2px; background: #454545; }
.combo > button { width: 16px; display: grid; place-items: center; }
.combo > input + button { border-left: 1px solid #5e5e5e; }
.combo input { flex: 1; padding-left: 4px; }
.options > .combo { margin-left: 5px; }
.chip { width: 19px; margin: -1px 0 -1px -1px; background: #fff; }
.stroke-chip { background: linear-gradient(#fff, #fff) center/3px 3px no-repeat, linear-gradient(#000, #000) center/5px 5px no-repeat, linear-gradient(#fff, #fff) center/7px 7px no-repeat, #000; border: 1px solid #eee; }
.pale { background: #e4e4e4; }
.dotted { font-weight: 600; padding-top: 2px; line-height: 11px; border-bottom: 1px dotted #ddd; }
label.dotted { margin-left: 11px; }
.options > .combo.num { width: 75px; margin-left: 4px; }
.combo.num .stepper { width: 15px; }
.profile { width: 101px; }
.options > .profile ~ .profile { margin-left: 6px; width: 98px; }
.options > .combo.num + .profile { margin-left: 6px; }
.options > .combo:nth-of-type(2) { margin-left: 6px; }
.sample { flex: 1; display: flex; align-items: center; gap: 4px; margin: -1px 0; padding: 0 4px 0 6px; background: #e4e4e4; color: #222; font-weight: 600; }
.sample b { flex: 1; height: 3px; background: #000; }
.options .profile + label.dotted { margin-left: 7px; }
.opac { width: 66px; }
.dim { color: #b0b0b0; margin-left: 4px; }
.style { width: 37px; }
.wheel { width: 43px; height: 22px; border: solid #4a4a4a; border-width: 0 1px; }
.link-align { margin-left: 4px; }
.link-transform { margin-left: 12px; }
.iso { gap: 5px; margin-left: 5px; }
.options-end { margin-left: auto; display: flex; align-items: center; gap: 6px; padding-right: 15px; }
.snap { width: 22px; height: 22px; background: #2e2e2e; border-radius: 2px; margin-left: 2px; }
.options-end .snap-menu { margin-left: -4px; }
.listbtn { margin-left: 10px; }

/* Docks */
.work { flex: 1; min-height: 0; display: flex; padding-bottom: 1px; }
.dock, .icons, .panels { display: flex; flex-direction: column; }
.dock-head { height: 11px; flex: none; display: flex; align-items: center; padding: 0 5px; background: #424242; color: #ccc; border-bottom: 1px solid #3a3a3a; }
.dock-head.end { justify-content: flex-end; }
.dock-head > svg, .float-head > svg { width: 7px; height: 5px; }
.dock-one { width: 36px; margin-right: 3px; }
.dock-two { width: 65px; margin-right: 3px; }
.dock-body { flex: 1; display: flex; flex-direction: column; background: #535353; }
.grip { display: block; width: 19px; height: 4px; margin: 3px auto; background: repeating-linear-gradient(90deg, #3a3a3a 0 1px, transparent 1px 2px); }
.tools { display: grid; grid-template-rows: repeat(16, 1fr); height: 360px; margin-top: 8px; justify-items: center; }
.tools.two { grid-template-columns: 29px 29px; grid-template-rows: repeat(14, 1fr); height: 315px; padding-left: 4px; }
.tool { position: relative; width: 26px; height: 20px; display: grid; place-items: center; border-radius: 2px; }
.tool svg { width: 20px; height: 20px; }
.letter { font: 17px/20px "DejaVu Serif", serif; color: #c8c8c8; }
.tool.on { background: #2d2d2d; }
.tool.more::after { content: ""; position: absolute; right: 1px; bottom: 0; width: 0; height: 0; border-left: 3px solid transparent; border-bottom: 3px solid #c8c8c8; }
.ink-row { display: flex; justify-content: space-between; margin: 0 1px 0 4px; padding-top: 6px; border-top: 1px solid #484848; }
.inks { position: relative; height: 28px; margin: 5px 4px 0 5px; }
.inks span, .big-inks span { position: absolute; }
.ink-fill { left: 0; top: 0; width: 18px; height: 18px; background: #fff; border: 1px solid #333; }
.ink-stroke { right: 0; bottom: 0; width: 18px; height: 18px; background: #535353; border: 4px solid #000; outline: 1px solid #ddd; outline-offset: -1px; box-shadow: inset 0 0 0 1px #ddd; }
.modes { display: flex; width: 26px; height: 9px; margin: 5px 5px 0; border: 1px solid #333; background: #fff; }
.modes span { flex: 1; }
.m-grad { background: linear-gradient(90deg, #fff, #222); }
.m-none { background: linear-gradient(to bottom right, #fff 40%, #e00 42% 58%, #fff 60%); transform: scaleX(-1); }
.m-black { background: #000; }
.solo { align-self: center; margin-top: 3px; }
.solo.last { margin-top: 11px; }
.big-inks { position: relative; height: 107px; margin: 4px 4px 0; border-top: 1px solid #484848; }
.big-inks .ink-fill { left: 1px; top: 4px; width: 33px; height: 30px; }
.big-inks .ink-stroke { left: 19px; top: 21px; width: 31px; height: 31px; border-width: 8px; }
.big-inks svg { position: absolute; right: 3px; top: 4px; }
.solo.right { align-self: flex-start; margin: 0 0 9px 18px; }

/* Document */
.doc { flex: 1; min-width: 0; display: flex; flex-direction: column; margin-right: 3px; }
.doc-tabs { height: 27px; flex: none; display: flex; background: #424242; border-bottom: 1px solid #666; }
.doc-tab { display: flex; align-items: center; gap: 18px; padding: 0 6px 0 8px; background: #535353; font-size: 10px; font-weight: 600; border-right: 1px solid #333; }
.view { flex: 1; min-height: 0; display: flex; }
.canvas { flex: 1; position: relative; background: #606060; overflow: hidden; }
.art { position: absolute; inset: 0; width: 100%; height: 100%; }
.brand { font: italic 700 16px "Open Sans", sans-serif; fill: #fff; }
.vscroll { width: 15px; display: flex; flex-direction: column; justify-content: space-between; align-items: center; background: #4a4a4a; padding-bottom: 4px; color: #aaa; }
.vscroll span { width: 15px; height: 24px; margin-top: 277px; background: #666; border-radius: 7px; }
.status { height: 16px; flex: none; display: flex; background: #535353; border-top: 1px solid #5a5a5a; }
.status .combo { height: 15px; border-bottom: 0; }
.zoomf { width: 64px; margin-left: 3px; }
.zoomf input, .page input { padding: 3px 0 0 3px; }
.pager { width: 39px; display: flex; align-items: center; justify-content: center; gap: 7px; }
.page { width: 54px; }
.toolname { width: 189px; padding-top: 3px; text-align: center; color: #ccc; border: solid #484848; border-width: 0 1px; margin-left: 1px; }
.play { align-self: center; margin: 0 6px 0 5px; }
.hscroll { flex: 1; display: flex; align-items: center; justify-content: space-between; background: #4a4a4a; color: #aaa; margin-right: 15px; padding: 0 3px 0 2px; }
.hscroll span { width: 24px; height: 14px; border-radius: 7px; background: #666; }

/* Icon dock */
.icons { position: relative; width: 35px; margin-right: 2px; }
.group { display: flex; flex-direction: column; align-items: center; background: #535353; margin-bottom: 2px; padding-bottom: 2px; }
.group.rest { flex: 1; margin: 0; }
.icons .grip { margin-bottom: 0; }
.ico { width: 26px; height: 27px; display: grid; place-items: center; }
.ico svg { width: 20px; height: 20px; }

/* Right panels */
.panels { width: 235px; }
.panel { background: #535353; flex: none; margin-bottom: 3px; }
.tabs { display: flex; height: 25px; background: #424242; }
.tab { display: flex; align-items: center; gap: 4px; padding: 0 8px; font-weight: 600; color: #a2a2a2; border-right: 1px solid #383838; white-space: nowrap; }
.tab.on { background: #535353; color: #fff; }
.tab.on svg { color: #b5b5b5; }
.burger { margin-left: auto; padding-right: 6px; color: #b5b5b5; }
.transform .tab.on { padding-left: 4px; }
.geometry { display: flex; align-items: flex-start; padding: 7px 0; margin: 0 5px; border-bottom: 1px solid #484848; }
.refpt { margin-top: 12px; }
.coords { display: grid; grid-template-columns: 25px 55px 26px 55px; row-gap: 6px; align-items: center; }
.coords label { display: flex; align-items: center; justify-content: flex-end; gap: 2px; padding-right: 4px; color: #ccc; }
.coords input, .hexrow input { height: 18px; padding: 0 3px; background: #454545; border: 1px solid #666; border-radius: 2px; }
.coords input { width: 100%; }
.coords .combo input { padding: 0 0 0 2px; height: 16px; border: 0; }
.angles { grid-column: 1 / -1; display: grid; grid-template-columns: 25px 53px 23px 53px; }
.unlink { margin: 10px 0 0 7px; }
.empty { margin: 0 5px; height: 138px; display: grid; place-items: center; color: #7c7c7c; border-bottom: 1px solid #484848; }
.checks { padding: 6px 6px 5px; display: grid; gap: 7px; font-weight: 600; }
.checks label { display: flex; align-items: center; gap: 4px; height: 12px; }
.checks input { appearance: none; width: 11px; height: 11px; border: 1px solid #c8c8c8; background: #484848; }
.transp .tab { padding: 0 2px 0 8px; }
.transp .tab.clip { width: 62px; overflow: hidden; padding-right: 0; border: 0; }
.transp .tab.on { padding-left: 3px; padding-right: 8px; }
.transp { height: 123px; }
.blendrow { display: flex; align-items: center; margin: 0 5px; padding: 7px 0 6px; border-bottom: 1px solid #484848; }
.selectbox { position: relative; width: 94px; height: 19px; background: #454545; border: 1px solid #666; border-radius: 2px; }
.selectbox select { appearance: none; width: 100%; height: 17px; padding-left: 5px; font-weight: 600; }
.selectbox svg { position: absolute; right: 3px; top: 4px; pointer-events: none; }
.blendrow label { margin: 0 4px 0 5px; color: #ccc; }
.blendrow .combo { width: 65px; }
.slim { height: 26px; }
.boards { flex: 1; display: flex; flex-direction: column; margin: 0; }
.boards .tabs { height: 28px; border-bottom: 2px solid #3a3a3a; }
.fill { flex: 1; }

/* Floating panels */
.float { position: absolute; background: #535353; border: 1px solid #3a3a3a; border-radius: 3px 3px 0 0; box-shadow: 0 0 3px #3338; }
.float-head { height: 12px; display: flex; align-items: center; justify-content: space-between; padding: 0 4px 0 7px; background: #424242; color: #ccc; border-bottom: 1px solid #383838; }
.gradient { right: 280px; top: 73px; width: 37px; padding-bottom: 3px; }
.gradient .grip { margin-bottom: 0; }
.float > .ico { margin: auto; }
.layers { left: 0; top: 249px; width: 35px; padding-bottom: 4px; }
.color { right: 8px; top: 420px; width: 225px; }
.color .float-head { justify-content: flex-end; gap: 9px; }
.color .tab.on { padding: 0 9px 0 5px; }
.hexrow { display: flex; align-items: center; padding: 7px 16px 6px 5px; }
.hexrow .modes { margin: 0; width: 38px; height: 14px; }
.hexrow label { margin-left: auto; padding-right: 5px; }
.hexrow input { width: 55px; font-size: 10px; padding-left: 4px; font-family: "Liberation Sans", sans-serif; }
.spectrum { height: 24px; margin: 0 16px 6px 5px; border: 1px solid #444; background: linear-gradient(#fff, #fff0 50%, #0000 50%, #000 95%), linear-gradient(90deg, #f00, #ff0 17%, #0f0 30%, #0ff 50%, #00f 67%, #f0f 83%, #f00); }
.foot { border-top: 1px solid #3a3a3a; background: #4a4a4a; }
.foot .grip { margin: 1px auto; }
.mini { left: 42px; top: 440px; width: 37px; }
.mini .ico { width: 26px; height: 20px; margin: 4px 4px 6px; }
.mini .ico.on { background: #2f2f2f; }
.mini .ico svg { width: 15px; height: 15px; }
.pathfinder { left: 79px; top: 450px; width: 217px; border-radius: 0; padding-bottom: 1px; }
.pathfinder .tabs { height: 28px; }
.pathfinder .tab { padding: 0 8px; }
.tabs-end { margin-left: auto; display: flex; align-items: center; gap: 6px; padding-right: 5px; color: #bbb; }
.tabs-end i { width: 1px; height: 10px; background: #aaa; }
.pathfinder h2 { margin: 0; padding: 8px 4px 7px; font-size: 9px; line-height: 12px; font-weight: 400; }
.pf-row { display: flex; align-items: center; height: 20px; gap: 21px; padding: 0 5px 0 9px; }
.pathfinder .pf-row + h2 { padding: 9px 4px 5px; }
.expand { width: 66px; height: 18px; margin-left: auto; background: #585858; color: #777; }
.pf-finders { padding-left: 5px; height: 27px; }
.marked { width: 27px; height: 27px; border: 2px solid #f00; margin-right: -6px; }
.arrow { position: absolute; left: 130px; top: 470px; pointer-events: none; overflow: visible; }
```
